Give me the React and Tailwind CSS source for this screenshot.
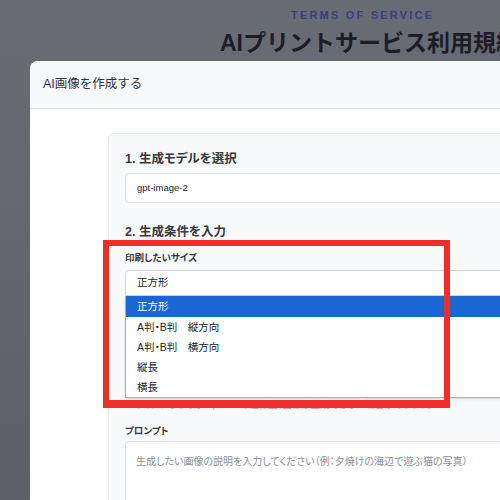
const sizeOptions = ["正方形", "A判・B判　縦方向", "A判・B判　横方向", "縦長", "横長"];

const App = () => {
  return (
    <div
      className="relative h-[500px] w-[500px] overflow-hidden bg-gradient-to-b from-[#696c74] to-[#5d6069]"
      style={{ fontFamily: '"Liberation Sans", "Noto Sans CJK JP", sans-serif' }}
    >
      {/* page behind the overlay */}
      <div className="pt-[7px] pl-[220px] whitespace-nowrap">
        <div className="ml-[71px] text-[11px] font-black tracking-[2.2px] text-[#3b3e7d] leading-[16px]">
          TERMS OF SERVICE
        </div>
        <h1 className="mt-[4px] text-[23px] font-bold leading-[32px] text-[#1b1d29]">
          AIプリントサービス利用規約
        </h1>
      </div>

      {/* modal */}
      <div className="absolute left-[30px] top-[61px] w-[520px] h-[480px] rounded-tl-lg bg-white">
        <div className="h-[48px] flex items-center pl-[13px] rounded-tl-lg bg-[#f8f9fb] border-b border-[#e2e5e9]">
          <span className="text-[12.5px] text-[#2e3338]">AI画像を作成する</span>
        </div>

        <div className="pt-[24px] pl-[78px]">
          <div className="rounded-md border border-[#e3e6ea] bg-[#f8f9fa] pl-[16px] pt-[15px] h-[400px] [font-feature-settings:'palt']">
            <h2 className="text-[12.5px] font-bold leading-[20px] text-[#343a40]">
              1. 生成モデルを選択
            </h2>
            <div className="mt-[4px] h-[30px] flex items-center pl-[11px] rounded border border-[#dee2e6] bg-white">
              <span className="text-[9.5px] text-[#212529]">gpt-image-2</span>
            </div>

            <h2 className="mt-[19px] text-[12.5px] font-bold leading-[20px] text-[#343a40]">
              2. 生成条件を入力
            </h2>
            <div className="mt-[8px] text-[9.5px] font-bold leading-[16px] text-[#343a40]">
              印刷したいサイズ
            </div>

            <div className="relative mt-[4px]">
              <div className="h-[26px] flex items-center pl-[11px] rounded-t border border-[#d3d7db] bg-white">
                <span className="text-[10.5px] text-[#212529]">正方形</span>
              </div>
              <ul className="absolute left-0 right-0 top-[26px] z-10 bg-white border-l border-b border-[#a9acb0] shadow-sm">
                {sizeOptions.map((opt, i) => (
                  <li
                    key={opt}
                    className={`flex items-center pl-[11px] text-[10.5px] whitespace-pre ${
                      i === 0
                        ? "h-[21px] bg-[#1a66d2] text-white"
                        : "h-[20px] pt-[1px] text-[#212529]"
                    }`}
                  >
                    {opt}
                  </li>
                ))}
              </ul>
            </div>

            <p className="mt-[101px] text-[9.5px] leading-[16px] text-[#e08a8a] whitespace-nowrap">
              ※サイズによっては OpenAI の仕様上、画像が生成できない場合があります。
            </p>

            <div className="mt-[10px] text-[9.5px] font-bold leading-[16px] text-[#343a40]">
              プロンプト
            </div>
            <div className="mt-[2px] h-[80px] rounded border border-[#dee2e6] bg-white pl-[10px] pt-[6px]">
              <span className="text-[10px] text-[#8a9096] whitespace-nowrap">
                生成したい画像の説明を入力してください（例：夕焼けの海辺で遊ぶ猫の写真）
              </span>
            </div>
          </div>
        </div>
      </div>

      {/* red annotation box */}
      <div className="absolute left-[103px] top-[240px] w-[347px] h-[168px] border-[6px] border-b-[8px] border-[#f02d2d] z-20" />
    </div>
  );
};

export default App;
